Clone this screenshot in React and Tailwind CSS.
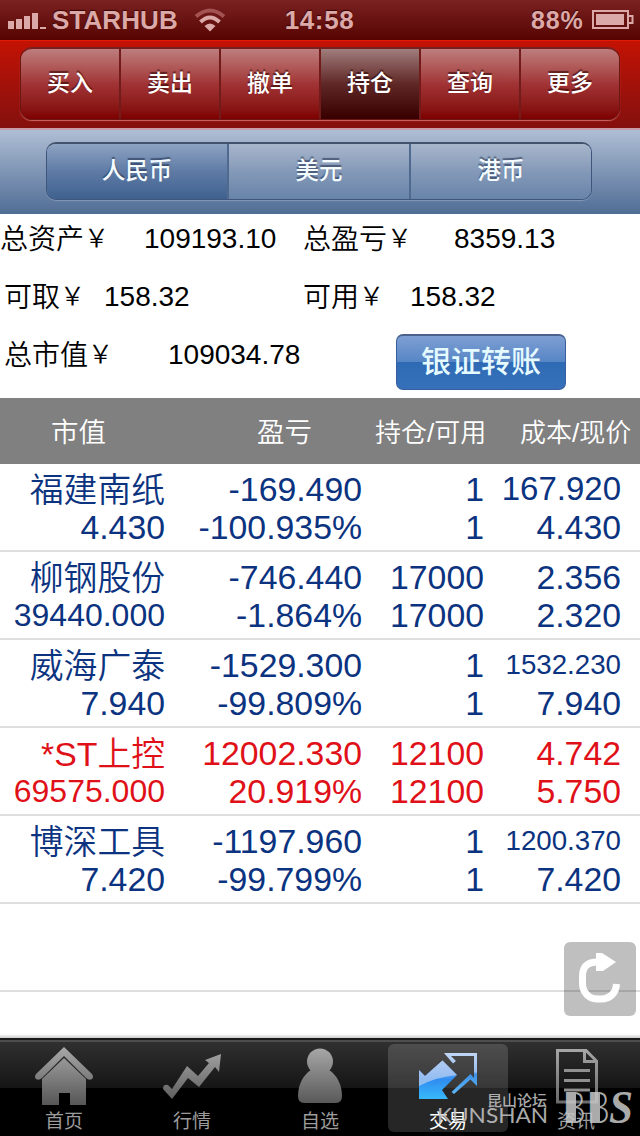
import clsx from 'clsx'

const ACTIONS = ['买入', '卖出', '撤单', '持仓', '查询', '更多']
const CURRENCIES = ['人民币', '美元', '港币']

const HOLDINGS = [
  { name: '福建南纸', value: '4.430', profit: '-169.490', rate: '-100.935%', held: '1', usable: '1', cost: '167.920', price: '4.430' },
  { name: '柳钢股份', value: '39440.000', profit: '-746.440', rate: '-1.864%', held: '17000', usable: '17000', cost: '2.356', price: '2.320' },
  { name: '威海广泰', value: '7.940', profit: '-1529.300', rate: '-99.809%', held: '1', usable: '1', cost: '1532.230', price: '7.940' },
  { name: '*ST上控', value: '69575.000', profit: '12002.330', rate: '20.919%', held: '12100', usable: '12100', cost: '4.742', price: '5.750', up: true },
  { name: '博深工具', value: '7.420', profit: '-1197.960', rate: '-99.799%', held: '1', usable: '1', cost: '1200.370', price: '7.420' },
]

function StatusBar() {
  return (
    <header className="relative flex h-10 items-center bg-linear-to-b from-[#7a2121] to-[#560402] text-[26px] font-bold leading-none text-[#dba9a8] [text-shadow:0_-1px_1px_#3a0000]">
      <svg className="mt-1 ml-2 shrink-0" width="38" height="18" fill="#dba9a8">
        <rect x="0" y="8" width="6" height="8" />
        <rect x="8" y="6" width="6" height="10" />
        <rect x="16" y="3" width="6" height="13" />
        <rect x="24" y="0" width="6" height="16" />
        <rect x="32" y="14" width="6" height="2" />
      </svg>
      <span className="ml-1.5 w-[126px] tracking-[0.1px]">STARHUB</span>
      <svg className="ml-4 shrink-0" width="32" height="24" viewBox="0 0 32 24" fill="none" strokeWidth="4">
        <path d="M2 8.500 Q16 -3.500 30 8.500" stroke="#a45252" />
        <path d="M6.500 14 Q16 5 25.500 14" stroke="#dba9a8" />
        <path d="M10.500 18 Q16 13 21.500 18 L16 23.500 Z" fill="#dba9a8" />
      </svg>
      <span className="absolute inset-x-0 pr-px text-center tracking-[0.6px]">14:58</span>
      <span className="ml-auto w-[55px] text-[25px] tracking-[0.8px] whitespace-nowrap">88%</span>
      <svg className="ml-1.5 mr-1.5 shrink-0" width="42" height="20" fill="none" stroke="#dba9a8" strokeWidth="2">
        <rect x="1" y="1" width="35" height="17" />
        <rect x="4" y="4" width="28" height="11" fill="#dba9a8" stroke="none" />
        <path d="M37 6 h3.500 v7 h-3.500" />
      </svg>
    </header>
  )
}

function ActionBar() {
  return (
    <div className="h-[88px] border-t border-[#e01c08] bg-linear-to-b from-[#c31203] to-[#84100d] px-5 pt-1.5">
      <div className="flex h-[73px] overflow-hidden rounded-[12px] border border-t-2 border-[#6d1512] border-t-[#762020] shadow-[0_1px_1px_#c66]">
        {ACTIONS.map((label) => (
          <div
            key={label}
            className={clsx(
              'flex flex-1 items-center justify-center border-r-2 border-[#711b1b] pb-0.5 text-[23px] font-[450] text-white last:border-r-0 [text-shadow:0_-2px_1px_rgba(40,0,0,0.6)]',
              label === '持仓'
                ? 'bg-linear-to-b from-[#a07d7d] via-[#5f2827] to-[#370000]'
                : 'bg-linear-to-b from-[#bd7d7e] via-[#a13335] to-[#7e0000]'
            )}
          >
            {label}
          </div>
        ))}
      </div>
    </div>
  )
}

function CurrencyBar() {
  return (
    <div className="h-[86px] border-t-2 border-[#c79ca8] bg-linear-to-b from-[#afbed4] to-[#506d95] px-[46px] pt-3">
      <div className="flex h-[58px] w-[546px] overflow-hidden rounded-[10px] border border-t-2 border-[#3f557c] border-t-[#42526c] shadow-[0_1px_1px_#8599b8]">
        {CURRENCIES.map((label) => (
          <div
            key={label}
            className={clsx(
              'flex flex-1 items-center justify-center border-r-2 border-[#50698f] text-[23.5px] font-[450] text-[#f4fbff] last:border-r-0 [text-shadow:0_-2px_1px_rgba(30,45,75,0.6)]',
              label === '人民币'
                ? 'bg-linear-to-b from-[#8ea3c2] via-[#5f7ba5] to-[#3f618f]'
                : 'bg-linear-to-b from-[#a8b6cc] via-[#8499b8] to-[#6884a9]'
            )}
          >
            {label}
          </div>
        ))}
      </div>
    </div>
  )
}

function Label({ className, children }) {
  return (
    <span className={clsx('flex items-center pt-0.5 font-[350]', className)}>
      {children}
      <span className="pb-0.5 text-[25px]">￥</span>
    </span>
  )
}

function Summary() {
  return (
    <section className="h-[184px] text-[28px] leading-none whitespace-nowrap text-black">
      <div className="flex h-[49px] items-center">
        <Label className="w-36">总资产</Label>
        <span className="w-[159px]">109193.10</span>
        <Label className="w-[151px]">总盈亏</Label>
        <span>8359.13</span>
      </div>
      <div className="flex h-[67px] items-center">
        <Label className="w-[104px] pl-1">可取</Label>
        <span className="w-[199px]">158.32</span>
        <Label className="w-[107px]">可用</Label>
        <span>158.32</span>
      </div>
      <div className="flex">
        <div className="flex h-[49px] w-[396px] items-center">
          <Label className="w-[168px] pl-1">总市值</Label>
          <span>109034.78</span>
        </div>
        <button
          type="button"
          className="mt-1 flex h-14 w-[170px] items-center justify-center rounded-[7px] border border-t-2 border-[#375f9c] border-t-[#4b628c] bg-[linear-gradient(to_bottom,#7f9fd3_0%,#5585c5_50%,#2f6bb5_50%,#3670ba_100%)] pb-0.5 text-[30px] font-[450] text-[#e4faff]"
        >
          银证转账
        </button>
      </div>
    </section>
  )
}

function Cell({ top, bottom, className, topClass, bottomClass }) {
  return (
    <div className={clsx('flex flex-col items-end', className)}>
      <span className={clsx('h-[38px]', topClass)}>{top}</span>
      <span className={clsx('h-[38px]', bottomClass)}>{bottom}</span>
    </div>
  )
}

// long costs shrink to stay inside their column
function costSize(text) {
  if (text.length > 7) return 'text-[27.7px]'
  if (text.length > 6) return 'text-[33px]'
  return ''
}

function Holdings() {
  return (
    <section>
      <div className="flex h-[66px] items-center bg-[#808080] pt-1 text-[26px] font-[350] whitespace-nowrap text-white">
        <span className="w-[257px] pl-[51px] text-[27.5px]">市值</span>
        <span className="w-[118px] text-[27.5px]">盈亏</span>
        <span className="w-[145px]">持仓/可用</span>
        <span>成本/现价</span>
      </div>
      {HOLDINGS.map((h) => (
        <div
          key={h.name}
          className={clsx(
            'flex h-[88px] border-b-2 border-[#dedede] pt-1.5 text-[33.8px] leading-[38px] whitespace-nowrap',
            h.up ? 'text-[#e01018]' : 'text-[#0b3380]'
          )}
        >
          <Cell
            className="w-[165px]"
            top={h.name}
            bottom={h.value}
            topClass="pt-px font-[350]"
            bottomClass={h.value.length > 8 ? 'text-[32px]' : ''}
          />
          <Cell className="w-[197px]" top={h.profit} bottom={h.rate} />
          <Cell className="w-[122px]" top={h.held} bottom={h.usable} />
          <Cell className="w-[137px]" top={h.cost} bottom={h.price} topClass={costSize(h.cost)} />
        </div>
      ))}
      <div className="h-[88px] border-b-2 border-[#dedede]" />
    </section>
  )
}

function HomeIcon() {
  return (
    <svg width="60" height="60" viewBox="0 0 60 60" fill="url(#metal)">
      <path d="M30 1 L58 28 Q60 31 58 33 Q55 35 52 32 L30 10 L8 32 Q5 35 2 33 Q0 31 2 28 Z" />
      <path d="M30 12 L52 33 V59 H36 V47 H25 V59 H8 V33 Z" />
    </svg>
  )
}

function TrendIcon() {
  return (
    <svg width="60" height="60" viewBox="0 0 60 60" fill="url(#metal)">
      <path d="M59 8 L57 26 L53 21 L37 41 L26 32 L10 53 L1 43 Q1 38 6 39 L10 43 L25 20 L36 30 L47 17 L43 14 Z" />
    </svg>
  )
}

function PersonIcon() {
  return (
    <svg width="60" height="60" viewBox="0 0 60 60" fill="url(#metal)">
      <circle cx="30" cy="15.500" r="13" />
      <path d="M21 24 H39 C47 29 52 39 52 50 Q52 57 46 57 H14 Q8 57 8 50 C8 39 13 29 21 24 Z" />
    </svg>
  )
}

function TradeIcon() {
  return (
    <svg width="60" height="60" viewBox="0 0 60 60">
      <path d="M24.500 14.500 L39 29 L24 44 L30 53 H1 V24 L7 30 Z" fill="url(#blueArrow)" />
      <path d="M1 24 L7 30 L24.500 14.500 L39 29 Q18 31 1 40 Z" fill="#b4ccf0" opacity="0.75" />
      <path
        d="M26 7 H59 V40 L52.500 33.500 L36 48 L33.500 46 L52.500 28 L56 32 V10 H33 L38 15 L35 17.500 Z"
        fill="url(#blueLine)"
      />
    </svg>
  )
}

function DocIcon() {
  return (
    <svg width="60" height="60" viewBox="0 0 60 60" fill="none" stroke="url(#metalLine)" strokeWidth="3">
      <path d="M11.500 4.500 H40 L50.500 15 V56 H11.500 Z" />
      <path d="M38.500 4.500 V15.500 H50.500" />
      <path d="M18 24.500 H44 M18 34.500 H44 M18 44 H44" stroke="#909090" />
    </svg>
  )
}

const TABS = [
  { label: '首页', icon: HomeIcon },
  { label: '行情', icon: TrendIcon },
  { label: '自选', icon: PersonIcon },
  { label: '交易', icon: TradeIcon, active: true },
  { label: '资讯', icon: DocIcon },
]

function Watermark() {
  return (
    <svg className="absolute right-0 bottom-0" width="210" height="60" fill="#c8c8c8" opacity="0.85">
      <text x="57" y="30" fontSize="15" fontWeight="500" textLength="60" lengthAdjust="spacingAndGlyphs">昆山论坛</text>
      <text x="7" y="47" fontSize="21" fontFamily="Lato" textLength="111" lengthAdjust="spacingAndGlyphs">KUNSHAN</text>
      <rect x="137" y="16" width="9" height="31" />
      <rect x="161" y="16" width="9" height="31" />
      <text x="132" y="47" fontSize="43" fontFamily="Lato" fontWeight="300" textLength="48" lengthAdjust="spacingAndGlyphs">BB</text>
      <text x="179" y="47" fontSize="47" fontFamily="Liberation Serif" fontWeight="bold" fontStyle="italic" textLength="24" lengthAdjust="spacingAndGlyphs">S</text>
    </svg>
  )
}

function TabBar() {
  return (
    <nav className="relative h-[98px] border-t-2 border-[#191919] bg-[linear-gradient(to_bottom,#4d4d4d_0px,#4d4d4d_2px,#303030_2px,#151515_48px,#000_48px)]">
      <svg className="absolute" width="0" height="0">
        <defs>
          <linearGradient id="metal" x1="0" y1="0" x2="0" y2="60" gradientUnits="userSpaceOnUse">
            <stop offset="0" stopColor="#aaa" />
            <stop offset="1" stopColor="#555" />
          </linearGradient>
          <linearGradient id="metalLine" x1="0" y1="0" x2="0" y2="60" gradientUnits="userSpaceOnUse">
            <stop offset="0" stopColor="#aaa" />
            <stop offset="1" stopColor="#666" />
          </linearGradient>
          <linearGradient id="blueArrow" x1="0" y1="0" x2="0" y2="1">
            <stop offset="0" stopColor="#a8c8f5" />
            <stop offset="0.5" stopColor="#2f8df0" />
            <stop offset="1" stopColor="#38b9fb" />
          </linearGradient>
          <linearGradient id="blueLine" x1="0" y1="6" x2="0" y2="50" gradientUnits="userSpaceOnUse">
            <stop offset="0" stopColor="#c3d8f5" />
            <stop offset="0.45" stopColor="#9bbdee" />
            <stop offset="0.5" stopColor="#3d91e6" />
            <stop offset="1" stopColor="#62b8f5" />
          </linearGradient>
        </defs>
      </svg>
      <div className="flex pt-1">
        {TABS.map(({ label, icon: Icon, active }) => (
          <div key={label} className="flex w-32 justify-center">
            <div
              className={clsx(
                'flex h-[88px] w-[120px] flex-col items-center rounded-md pt-0.5 text-[19px] leading-none',
                active ? 'bg-white/15 text-white' : 'text-[#9c9c9c]'
              )}
            >
              <Icon />
              <span className="mt-1.5">{label}</span>
            </div>
          </div>
        ))}
      </div>
      <Watermark />
    </nav>
  )
}

export default function App() {
  return (
    <div className="flex h-[1136px] w-[640px] flex-col overflow-hidden bg-white font-['Liberation_Sans','Noto_Sans_CJK_SC',sans-serif]">
      <StatusBar />
      <ActionBar />
      <CurrencyBar />
      <main className="relative flex-1">
        <Summary />
        <Holdings />
        <button
          type="button"
          aria-label="刷新"
          className="absolute right-1 bottom-[22px] flex h-[74px] w-[72px] items-center justify-center rounded-md bg-black/25"
        >
          <svg width="72" height="74" viewBox="0 0 72 74">
            <path d="M34 20 C23 20 18.500 25 18.500 34 V41 C18.500 51 25 57 34 57 H37 C46 57 52 51 52.500 42" fill="none" stroke="#fff" strokeWidth="7" />
            <path d="M32 11 H38 L52 20 L39 29 H32 Z" fill="#fff" />
          </svg>
        </button>
        <div className="absolute inset-x-0 bottom-0 h-1 bg-linear-to-b from-white to-[#ccc]" />
      </main>
      <TabBar />
    </div>
  )
}
